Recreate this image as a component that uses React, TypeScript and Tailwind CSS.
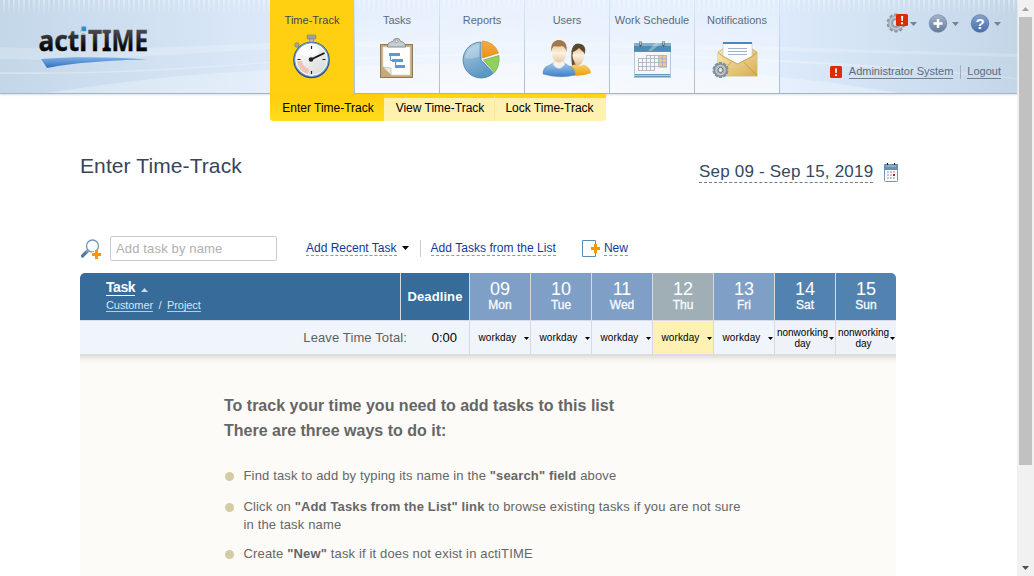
import React from 'react';

type IconProps = { className?: string };

const HeaderBackdrop = () => (
  <svg className="absolute inset-0" width="1017" height="93" viewBox="0 0 1017 93" preserveAspectRatio="none">
    <defs>
      <linearGradient id="hb" x1="0" x2="1" y1="0" y2="0">
        <stop offset="0" stopColor="#c3d7e9" />
        <stop offset="0.26" stopColor="#dbe8f9" />
        <stop offset="0.5" stopColor="#e4effd" />
        <stop offset="0.77" stopColor="#dceafb" />
        <stop offset="1" stopColor="#c3d6e8" />
      </linearGradient>
      <linearGradient id="fade" x1="0" x2="0" y1="0" y2="1">
        <stop offset="0" stopColor="#fff" stopOpacity=".35" />
        <stop offset="1" stopColor="#fff" stopOpacity="0" />
      </linearGradient>
      <pattern id="stripe" width="5" height="14" patternUnits="userSpaceOnUse">
        <rect x="3" width="2" height="14" fill="url(#fade)" />
      </pattern>
    </defs>
    <rect width="1017" height="93" fill="url(#hb)" />
    <rect width="1017" height="14" fill="url(#stripe)" />
    <path d="M0 47C90 52 170 47 270 43C500 37 750 46 1017 54V57C750 50 500 43 270 49C170 54 90 62 0 59Z" fill="#fff" opacity=".2" />
    <path d="M0 72C110 74 190 67 270 62C500 47 750 51 1017 78V79C750 54 500 50 270 63C190 69 110 75 0 74Z" fill="#fff" opacity=".28" />
    <path d="M45 93C130 80 200 73 270 70C500 58 700 60 900 93Z" fill="#fff" opacity=".28" />
  </svg>
);

const Logo = () => (
  <svg className="ml-[36px] mt-[12px]" width="120" height="60" viewBox="36 12 120 60">
    <defs>
      <linearGradient id="lt" x1="0" x2="0" y1="28" y2="52" gradientUnits="userSpaceOnUse">
        <stop offset="0" stopColor="#555" />
        <stop offset=".7" stopColor="#111" />
        <stop offset="1" stopColor="#000" />
      </linearGradient>
      <linearGradient id="ls" x1="0" x2="0" y1="0" y2="1">
        <stop offset="0" stopColor="#7eb0e5" />
        <stop offset="1" stopColor="#2f6fc2" />
      </linearGradient>
    </defs>
    <g fontFamily="Noto Sans, sans-serif" fontWeight="700" fontSize="29" fill="url(#lt)" stroke="url(#lt)" strokeWidth=".35">
      <text x="38.500" y="50.500" textLength="48.500" lengthAdjust="spacingAndGlyphs">acti</text>
      <text x="88" y="50.500" textLength="60" lengthAdjust="spacingAndGlyphs">TIME</text>
    </g>
    <rect x="81" y="27" width="6" height="6.300" fill="#cddeef" />
    <rect x="81.500" y="26.500" width="4.700" height="4.700" fill="#3090cf" />
    <path d="M41 59C75 56 110 57 147 59.400C110 60 70 63 47 68Z" fill="url(#ls)" />
  </svg>
);

const StopwatchIcon = ({ className }: IconProps) => (
  <svg className={className} width="44" height="48" viewBox="290 33 44 48">
    <defs>
      <linearGradient id="sw" x1="0" x2="1" y1="0" y2="1">
        <stop offset="0" stopColor="#fff" />
        <stop offset="1" stopColor="#d6d9d6" />
      </linearGradient>
    </defs>
    <rect x="307" y="35" width="9" height="4" rx="1" fill="#a1a49c" stroke="#777" strokeWidth=".6" />
    <rect x="309.500" y="39" width="4" height="4" fill="#bbb" stroke="#777" strokeWidth=".5" />
    <circle cx="297" cy="45" r="2.300" fill="#a9a698" stroke="#77745e" strokeWidth=".6" />
    <circle cx="311.500" cy="60" r="18.300" fill="#274f8c" />
    <circle cx="311.500" cy="59.600" r="17.300" fill="#7fa4d3" />
    <circle cx="311.500" cy="59.600" r="15.800" fill="url(#sw)" stroke="#fff" strokeWidth="1" />
    <path d="M297 61A14.500 14.500 0 0 0 308 74L309 69A10 10 0 0 1 302 61Z" fill="#efb7a2" opacity=".75" />
    <ellipse cx="309" cy="51" rx="10" ry="5.500" fill="#fff" opacity=".75" />
    <path d="M311.500 46v3M311.500 71v3M297.500 59.500h3M322.500 59.500h3" stroke="#222" strokeWidth="1.200" />
    <path d="M311 59.500L324.500 53" stroke="#111" strokeWidth="1.800" />
    <circle cx="311" cy="59.500" r="2.300" fill="#222" />
  </svg>
);

const ClipboardIcon = ({ className }: IconProps) => (
  <svg className={className} width="36" height="44" viewBox="379 37 36 44">
    <rect x="380.500" y="44.500" width="32" height="33" fill="#c8a873" stroke="#8d7a5d" />
    <path d="M383 47H410V75H391L383 67Z" fill="#fff" stroke="#ddd" strokeWidth=".7" />
    <path d="M383 67L391 68V75Z" fill="#ede8df" stroke="#aaa" strokeWidth=".6" />
    <path d="M387.500 47V46Q388 42 393 41.500A3.800 3.800 0 0 1 400.500 41.500Q405.500 42 405.500 47Z" fill="#c9cdd0" stroke="#777c80" strokeWidth=".8" />
    <circle cx="396.600" cy="41.300" r="1.400" fill="#fff" stroke="#777" strokeWidth=".7" />
    <path d="M390.500 56V60.500H394M395.500 62V66.500H397" fill="none" stroke="#5c93cb" />
    <path d="M389 54.500H400M392 60.500H403M395 66.500H405" stroke="#5a98d8" strokeWidth="3" />
  </svg>
);

const PieIcon = ({ className }: IconProps) => (
  <svg className={className} width="40" height="42" viewBox="461 39 40 42">
    <defs>
      <linearGradient id="pb" x1="0" x2=".4" y1="0" y2="1">
        <stop offset="0" stopColor="#b7d4e6" />
        <stop offset=".5" stopColor="#86b2d1" />
        <stop offset="1" stopColor="#5c98c4" />
      </linearGradient>
      <linearGradient id="po" x1="0" x2="0" y1="0" y2="1">
        <stop offset="0" stopColor="#f5ac45" />
        <stop offset="1" stopColor="#ec9118" />
      </linearGradient>
    </defs>
    <path d="M481 60V42A18 18 0 1 0 493.500 73Z" fill="url(#pb)" stroke="#44779f" strokeWidth=".8" />
    <path d="M482.500 58V41A17.500 17.500 0 0 1 498.500 53Z" fill="url(#po)" stroke="#d98923" strokeWidth=".7" />
    <path d="M483.500 60L499 55.500Q500 66 494.500 72.500Z" fill="#92d05e" stroke="#6cb140" strokeWidth=".7" />
    <path d="M465 58Q467 46 479 44.500V57Q470 60 465 58Z" fill="#fff" opacity=".25" />
  </svg>
);

const UsersIcon = ({ className }: IconProps) => (
  <svg className={className} width="52" height="40" viewBox="541 38 52 40">
    <defs>
      <linearGradient id="ub" x1="0" x2="0" y1="0" y2="1">
        <stop offset="0" stopColor="#a5cbee" />
        <stop offset="1" stopColor="#3f7fc6" />
      </linearGradient>
      <linearGradient id="uo" x1="0" x2="0" y1="0" y2="1">
        <stop offset="0" stopColor="#f8d264" />
        <stop offset="1" stopColor="#eb9d15" />
      </linearGradient>
      <linearGradient id="uf" x1="0" x2="0" y1="0" y2="1">
        <stop offset="0" stopColor="#e6c094" />
        <stop offset=".5" stopColor="#fdf1df" />
        <stop offset="1" stopColor="#e7c8a3" />
      </linearGradient>
    </defs>
    <path d="M572 66C571 56 570 44 578 43.500C586 44 586 50 584.500 54L576 66Z" fill="#65513a" />
    <path d="M569 75V67Q573 64 576 64.500L580 66L583 64.500Q590 66 591 73Q582 77 569 75Z" fill="url(#uo)" />
    <path d="M574.500 63L578 66.500L582 63V60H575Z" fill="#e8c399" />
    <ellipse cx="578.500" cy="55.500" rx="6" ry="8" fill="url(#uf)" />
    <path d="M571.500 52Q573 43.500 578.500 44Q585 44 584.500 53Q582 51 579 48Q575 52 571.500 52Z" fill="#5b4832" />
    <path d="M543 74Q543 66.500 549 65.500L555 62H563L568 65.500Q575 67 575 75Q560 79 543 74Z" fill="url(#ub)" stroke="#4b82c0" strokeWidth=".5" />
    <path d="M553 64L554.500 60H563L565 64Q561 69 559 68.500Q555 68 553 64Z" fill="#f5f1eb" stroke="#ccd9e8" strokeWidth=".6" />
    <ellipse cx="559" cy="53" rx="7.300" ry="9.500" fill="url(#uf)" />
    <path d="M551.300 52Q550 40.500 559 40Q568 40.500 566.500 52Q565.500 47 562 46Q557 47 554 46Q552 48 551.300 52Z" fill="#a1774c" />
  </svg>
);

const ScheduleIcon = ({ className }: IconProps) => (
  <svg className={className} width="40" height="40" viewBox="632 40 40 40">
    <rect x="634" y="43" width="37" height="35" fill="#6998b8" />
    <rect x="635" y="52" width="35" height="22" fill="#f5f6f8" />
    <path d="M634 43H671V51.500H634Z" fill="#4d8db4" />
    <path d="M634 43H671V46H634Z" fill="#83b0cb" />
    <path d="M648 51L655 43H661L652 51Z" fill="#fff" opacity=".3" />
    <path d="M634.500 52V77.500H670.500V52M635 75.500H670" fill="none" stroke="#b2c9da" />
    <rect x="659" y="55" width="8" height="13" fill="#f3ca76" />
    <path d="M638.500 58.500H666.500M638.500 62.500H666.500M638.500 66.500H666.500M638.500 70.500H654.500M646.500 55.500H666.500M638.500 58V71M642.500 58V71M646.500 55V71M650.500 55V71M654.500 55V71M658.500 55V67M662.500 55V67M666.500 55V67" stroke="#a9afbf" strokeWidth=".8" fill="none" />
    <path d="M640.500 41V46.500M663.500 41V46.500" stroke="#4c5257" strokeWidth="2" />
    <path d="M640.500 41V45M663.500 41V45" stroke="#c8ced2" strokeWidth=".8" />
  </svg>
);

const GEAR_TEETH = [0, 36, 72, 108, 144, 180, 216, 252, 288, 324];

const MailIcon = ({ className }: IconProps) => (
  <svg className={className} width="48" height="40" viewBox="711 40 48 40">
    <defs>
      <linearGradient id="me" x1="0" x2="1" y1="0" y2="1">
        <stop offset="0" stopColor="#f7e7ab" />
        <stop offset="1" stopColor="#d6ae55" />
      </linearGradient>
    </defs>
    <path d="M718 52L724 48H751L757 52V76H718Z" fill="url(#me)" stroke="#c3a055" strokeWidth=".6" />
    <path d="M723 42.500H752V57L737.500 65L723 56Z" fill="#fbfcfe" stroke="#b6c6d6" strokeWidth=".6" />
    <path d="M723 43H752" stroke="#4f87b4" strokeWidth="2" />
    <path d="M728 48.500H747M728 51.500H747M728 54.500H747" stroke="#8d9fc0" strokeWidth=".8" />
    <path d="M718 52L723 56L737.500 64L752 56L757 52V76H718Z" fill="url(#me)" />
    <path d="M718 52.500L723 56.500L737.500 64L752 56.500L757 52.500M732 61.500L718 76M743 61.500L757 75.500" fill="none" stroke="#c09347" strokeWidth=".8" />
    {GEAR_TEETH.map((a) => (
      <rect key={a} x="718.700" y="62" width="3.600" height="4" rx=".7" fill="#8290a0" transform={`rotate(${a} 720.500 70)`} />
    ))}
    <circle cx="720.500" cy="70" r="5" fill="none" stroke="#8290a0" strokeWidth="3.200" />
    <circle cx="720.500" cy="70" r="4.500" fill="none" stroke="#c5cdd5" strokeWidth="1.400" />
    <circle cx="720.500" cy="70" r="2.600" fill="#dde3ea" stroke="#5c6976" />
  </svg>
);

const Alert = ({ className }: IconProps) => (
  <svg className={className} width="12" height="12" viewBox="0 0 12 12">
    <rect width="12" height="12" rx="1.500" fill="#dd2c00" />
    <path d="M5 2.500H7L6.700 7H5.300ZM5 8.200H7V10H5Z" fill="#fff" />
  </svg>
);

const Toolbar = () => (
  <svg width="120" height="24" viewBox="884 12 120 24">
    <defs>
      <linearGradient id="tg" x1="0" x2="0" y1="0" y2="1">
        <stop offset="0" stopColor="#a5b4ca" />
        <stop offset="1" stopColor="#647b9b" />
      </linearGradient>
      <linearGradient id="tb" x1="0" x2="0" y1="0" y2="1">
        <stop offset="0" stopColor="#86a3d0" />
        <stop offset="1" stopColor="#456da8" />
      </linearGradient>
    </defs>
    {GEAR_TEETH.map((a) => (
      <rect key={a} x="894.200" y="13.600" width="3.600" height="4" rx=".8" fill="#8d98a5" transform={`rotate(${a} 896 23)`} />
    ))}
    <circle cx="896" cy="23" r="5.700" fill="none" stroke="#9ca6b0" strokeWidth="4" />
    <circle cx="896" cy="23" r="6" fill="none" stroke="#c5cbd2" strokeWidth="1.500" />
    <circle cx="896" cy="23" r="3.500" fill="#d8e2ee" stroke="#6f7c8b" strokeWidth=".8" />
    <rect x="896" y="14" width="12" height="12" rx="1.500" fill="#dd2c00" />
    <path d="M901 16H903.200L902.800 21H901.400ZM901 22.300H903V24.300H901Z" fill="#fff" />
    <circle cx="938" cy="23.500" r="8.800" fill="url(#tg)" stroke="#6c7f9d" strokeWidth=".6" />
    <path d="M938 19V28M933.500 23.500H942.500" stroke="#fff" strokeWidth="2.500" />
    <circle cx="980" cy="23.500" r="8.800" fill="url(#tb)" stroke="#466a9e" strokeWidth=".6" />
    <text x="980" y="28.700" textAnchor="middle" fontFamily="Liberation Sans, sans-serif" fontWeight="700" fontSize="15" fill="#fff">?</text>
    <path d="M910 22H917L913.500 26ZM952 22H959L955.500 26ZM994 22H1001L997.500 26Z" fill="#75829b" />
  </svg>
);

const SearchAdd = () => (
  <svg width="21" height="21" viewBox="81 239 21 21">
    <path d="M82.500 256L87 251.500" stroke="#56799e" strokeWidth="3.200" strokeLinecap="round" />
    <path d="M86 252L88.500 249.500" stroke="#8aa5bd" strokeWidth="2" />
    <circle cx="92.500" cy="246" r="6" fill="#fafcfe" stroke="#7698b5" strokeWidth="1.300" />
    <path d="M96.500 250V259M92 254.500H101" stroke="#fff" strokeWidth="5" />
    <path d="M96.500 250V259M92 254.500H101" stroke="#f39800" strokeWidth="3" />
  </svg>
);

const NewIcon = () => (
  <svg width="18" height="18" viewBox="582 240 18 18">
    <path d="M595.500 244V240.500H582.500V256.500H595.500V253" fill="none" stroke="#5c8ab5" />
    <path d="M595.500 244V253M591 248.500H600" stroke="#f39800" strokeWidth="3" />
  </svg>
);

const MiniCalendar = () => (
  <svg width="14" height="19" viewBox="884 163 14 19">
    <rect x="884.500" y="165.500" width="13" height="16" rx=".8" fill="#fff" stroke="#7897b4" />
    <rect x="884" y="164" width="14" height="6" fill="#6790b2" />
    <path d="M886 166H896" stroke="#b1cadd" />
    <path d="M887.500 163V165M894.500 163V165" stroke="#111" />
    {[171, 174, 177].map((y) =>
      [887, 890, 893].map((x) => (
        <rect key={`${x}-${y}`} x={x} y={y} width="2" height="2" fill={x === 893 && y === 174 ? '#d21b00' : '#b9c9d9'} />
      )),
    )}
  </svg>
);

const Caret = ({ className }: IconProps) => (
  <svg className={className} width="7" height="4" viewBox="0 0 7 4" preserveAspectRatio="none">
    <path d="M0 0H7L3.500 4Z" fill="currentColor" />
  </svg>
);

const TABS = [
  { label: 'Time-Track', Icon: StopwatchIcon, icon: 'ml-[20px] mt-[4px]' },
  { label: 'Tasks', Icon: ClipboardIcon, icon: 'ml-[24px] mt-[8px]' },
  { label: 'Reports', Icon: PieIcon, icon: 'ml-[21px] mt-[10px]' },
  { label: 'Users', Icon: UsersIcon, icon: 'ml-[16px] mt-[9px]' },
  { label: 'Work Schedule', Icon: ScheduleIcon, icon: 'ml-[22px] mt-[11px]' },
  { label: 'Notifications', Icon: MailIcon, icon: 'ml-[16px] mt-[11px]' },
];

const DAYS = [
  { n: '09', d: 'Mon', head: 'bg-[#7f9fc6]', cell: 'bg-[#f0f5fb]', kind: 'workday' },
  { n: '10', d: 'Tue', head: 'bg-[#7f9fc6]', cell: 'bg-[#f0f5fb]', kind: 'workday' },
  { n: '11', d: 'Wed', head: 'bg-[#7f9fc6]', cell: 'bg-[#f0f5fb]', kind: 'workday' },
  { n: '12', d: 'Thu', head: 'bg-[#9fafb5]', cell: 'bg-[#fff1b3]', kind: 'workday' },
  { n: '13', d: 'Fri', head: 'bg-[#7f9fc6]', cell: 'bg-[#f0f5fb]', kind: 'workday' },
  { n: '14', d: 'Sat', head: 'bg-[#5282af]', cell: 'bg-[#eff3f9]', kind: 'nonworking day' },
  { n: '15', d: 'Sun', head: 'bg-[#5282af] rounded-tr-[5px]', cell: 'bg-[#eff3f9]', kind: 'nonworking day' },
];

const Header = () => (
  <header className="relative h-[94px] border-b border-[#a3b4c8] bg-[#d9e7f8] shadow-[0_1px_2px_rgba(0,0,0,0.12)]">
    <HeaderBackdrop />
    <div className="relative flex h-[93px]">
      <div className="w-[270px] shrink-0">
        <Logo />
      </div>
      <nav className="flex">
        {TABS.map(({ label, Icon, icon }, i) => (
          <div key={label} className="flex w-[85px]">
            <div
              className={
                i === 0
                  ? 'h-[94px] w-[84px] bg-[#ffd012] text-[#40474f]'
                  : 'h-[93px] w-[84px] bg-linear-to-b from-white/15 to-white/60 text-[#5b6b7c]'
              }
            >
              <div className="flex h-[29px] justify-center pt-[13px] text-[11px] leading-[14px] whitespace-nowrap">
                <span>{label}</span>
              </div>
              <Icon className={icon} />
            </div>
            <div className="h-[93px] w-px bg-linear-to-b from-[#dbe8f8] to-[#a9bdd4]" />
          </div>
        ))}
      </nav>
      <div className="flex flex-1 flex-col items-end pr-[13px] pt-[12px]">
        <Toolbar />
        <div className="mt-[29px] mr-[3px] flex items-start text-[11px] leading-[13px] text-[#5a6a7c]">
          <Alert className="mt-px mr-[7px]" />
          <span className="border-b border-[#76818d]">Administrator System</span>
          <span className="mr-[6px] ml-[7px] h-[14px] w-px bg-[#a6b0bc]" />
          <span className="border-b border-[#76818d]">Logout</span>
        </div>
      </div>
    </div>
  </header>
);

const SubMenu = () => (
  <div className="relative ml-[270px] flex h-[27px] w-[336px] text-[12px] text-black">
    <div className="w-[114px] rounded-bl-[3px] bg-linear-to-b from-[#ffcd0b] to-[#ffdc1e] pl-[2px] text-center leading-[28px]">Enter Time-Track</div>
    <div className="w-[111px] border-t-4 border-r border-t-[#ffd615] border-r-[#fbe9a0] bg-[#fff1b0] pl-[2px] text-center leading-[20px]">View Time-Track</div>
    <div className="w-[111px] rounded-br-[3px] border-t-4 border-[#ffd615] bg-[#fff1b0] pr-[2px] text-center leading-[20px]">Lock Time-Track</div>
  </div>
);

const link = 'border-b border-dashed border-[#7d98cc] leading-[14px]';

const ActionBar = () => (
  <div className="flex h-[25px] items-start text-[12px] text-[#10389c]">
    <div className="mt-[3px] w-[30px] pl-px">
      <SearchAdd />
    </div>
    <div className="h-[25px] w-[167px] rounded-[2px] border border-[#c5ccd3] bg-white pl-[5px] text-[13px] leading-[23px] tracking-[0.15px] text-[#b0b0b0]">
      Add task by name
    </div>
    <span className={`mt-[5px] ml-[29px] ${link}`}>Add Recent Task</span>
    <Caret className="mt-[10px] ml-[5px] text-black" />
    <span className="mt-[4px] ml-[11px] h-[17px] w-px bg-[#c8cdd4]" />
    <span className={`mt-[5px] ml-[10px] tracking-[0.04px] ${link}`}>Add Tasks from the List</span>
    <span className="mt-[4px] ml-[26px]">
      <NewIcon />
    </span>
    <span className={`mt-[5px] ml-[4px] ${link}`}>New</span>
  </div>
);

const Bullet = () => <i className="mt-[5px] mr-[10px] size-[9px] shrink-0 rounded-full bg-[#d3cba3]" />;

const TimeTable = () => (
  <div className="w-[816px]">
    <div className="flex h-[47px] text-white">
      <div className="w-[320px] rounded-tl-[5px] bg-[#366b9a] pt-[6px] pl-[26px]">
        <div className="flex items-start">
          <span className="border-b border-white text-[14px] leading-[16px] font-bold tracking-[-0.45px]">Task</span>
          <svg className="mt-[9px] ml-[6px]" width="7" height="4" viewBox="0 0 7 4">
            <path d="M0 4H7L3.500 0Z" fill="#c9dcec" />
          </svg>
        </div>
        <div className="mt-[3px] flex text-[11px] leading-[12px] tracking-[-0.08px] text-[#d3e6f6]">
          <span className="border-b border-[#b5cde1]">Customer</span>
          <span className="mx-[5.500px]">/</span>
          <span className="border-b border-[#b5cde1]">Project</span>
        </div>
      </div>
      <div className="w-[69px] border-l border-[#d5dae1] bg-[#366b9a] text-center text-[13px] leading-[47px] font-bold tracking-[0.1px]">Deadline</div>
      {DAYS.map((day) => (
        <div key={day.n} className={`w-[61px] border-l border-[#d5dae1] pt-[7px] text-center ${day.head}`}>
          <div className="text-[18px] leading-[18px]">{day.n}</div>
          <div className="text-[12px] leading-[14px] text-[#f7fbff] [-webkit-text-stroke:0.3px_#f7fbff]">{day.d}</div>
        </div>
      ))}
    </div>
    <div className="flex h-[35px] border-y border-[#d9dce4] bg-[#f0f5fb]">
      <div className="w-[320px] bg-[#f0f5fb] text-right text-[13px] leading-[33px] text-[#5f5f5f]">
        <span className="-mr-[7px] tracking-[0.12px]">Leave Time Total:</span>
      </div>
      <div className="w-[69px] pr-[12px] text-right text-[13px] leading-[33px] text-black">0:00</div>
      {DAYS.map((day) => (
        <div key={day.n} className={`flex w-[61px] items-center border-l border-[#d5dae1] ${day.cell}`}>
          <span className="w-[54px] shrink-0 pl-px text-center text-[10px] leading-[11px] text-black">
            <span className={day.kind === 'workday' ? 'tracking-[0.1px]' : ''}>{day.kind}</span>
          </span>
          <Caret className="mt-[2px] h-[3px] w-[5px] shrink-0 text-black" />
        </div>
      ))}
    </div>
    <section className="h-[221px] bg-[#fcfbf8] bg-linear-to-b from-[#dedcd5] via-[#f6f4ee] via-[5px] to-[#fcfbf8] to-[10px] pt-[38px] pl-[144px] text-[#666]">
      <div className="text-[16px] leading-[25px] font-bold">
        <p>To track your time you need to add tasks to this list</p>
        <p>There are three ways to do it:</p>
      </div>
      <ul className="mt-[24px] ml-[0.500px] text-[13px] leading-[18px] tracking-[0.148px]">
        <li className="flex">
          <Bullet />
          <p>Find task to add by typing its name in the <b>"search" field</b> above</p>
        </li>
        <li className="mt-[13px] flex">
          <Bullet />
          <p>
            Click on <b>"Add Tasks from the List" link</b> to browse existing tasks if you are not sure
            <br />
            in the task name
          </p>
        </li>
        <li className="mt-[11px] flex">
          <Bullet />
          <p>Create <b>"New"</b> task if it does not exist in actiTIME</p>
        </li>
      </ul>
    </section>
  </div>
);

const Scrollbar = () => (
  <div className="flex h-[576px] w-[17px] flex-col items-center bg-[#f1f1f1]">
    <div className="flex h-[17px] items-center">
      <Caret className="rotate-180 text-[#a3a3a3]" />
    </div>
    <div className="h-[448px] w-[13px] bg-[#c1c1c1]" />
    <div className="mt-auto flex h-[17px] items-center">
      <Caret className="text-[#505050]" />
    </div>
  </div>
);

export default function App() {
  return (
    <div className="flex h-[576px] w-[1034px] overflow-hidden bg-white [font-family:'Liberation_Sans',Arial,sans-serif]">
      <main className="w-[1017px] shrink-0">
        <Header />
        <SubMenu />
        <div className="pl-[80px]">
          <div className="flex h-[115px] items-start pt-[33px]">
            <h1 className="w-[619px] text-[21px] leading-[24px] tracking-[0.1px] text-[#35455c]">Enter Time-Track</h1>
            <span className="mt-[7px] border-b border-dashed border-[#737b88] text-[17px] leading-[21px] tracking-[0.2px] text-[#35495f]">
              Sep 09 - Sep 15, 2019
            </span>
            <span className="mt-[9px] ml-[11px]">
              <MiniCalendar />
            </span>
          </div>
          <ActionBar />
          <div className="mt-[12px]">
            <TimeTable />
          </div>
        </div>
      </main>
      <Scrollbar />
    </div>
  );
}
